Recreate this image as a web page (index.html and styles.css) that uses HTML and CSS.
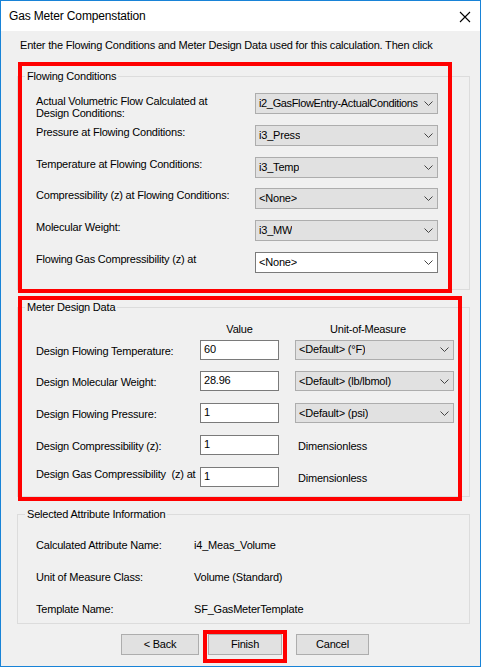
FILE: index.html
```html
<!DOCTYPE html>
<html>
<head>
<meta charset="utf-8">
<title>Gas Meter Compenstation</title>
<link rel="stylesheet" href="styles.css">
</head>
<body>
<div class="window">
  <div class="titlebar">
    <span class="title">Gas Meter Compenstation</span>
    <svg class="close" width="12" height="12" viewBox="0 0 12 12"><path d="M1 1L11 11M11 1L1 11" stroke="#000" stroke-width="1.1" fill="none"/></svg>
  </div>
  <div class="body">
    <p class="intro">Enter the Flowing Conditions and Meter Design Data used for this calculation. Then click</p>

    <div class="group g-flow">
      <span class="legend">Flowing Conditions</span>
      <div class="flow-grid">
        <span class="lbl two">Actual Volumetric Flow Calculated at<br>Design Conditions:</span>
        <div class="combo"><span class="tight">i2_GasFlowEntry-ActualConditions</span><svg class="chev" width="9" height="5" viewBox="0 0 9 5"><path d="M0.5 0.5L4.5 4.5L8.5 0.5" stroke="#444" fill="none"/></svg></div>
        <span class="lbl">Pressure at Flowing Conditions:</span>
        <div class="combo"><span>i3_Press</span><svg class="chev" width="9" height="5" viewBox="0 0 9 5"><path d="M0.5 0.5L4.5 4.5L8.5 0.5" stroke="#444" fill="none"/></svg></div>
        <span class="lbl">Temperature at Flowing Conditions:</span>
        <div class="combo"><span>i3_Temp</span><svg class="chev" width="9" height="5" viewBox="0 0 9 5"><path d="M0.5 0.5L4.5 4.5L8.5 0.5" stroke="#444" fill="none"/></svg></div>
        <span class="lbl">Compressibility (z) at Flowing Conditions:</span>
        <div class="combo"><span>&lt;None&gt;</span><svg class="chev" width="9" height="5" viewBox="0 0 9 5"><path d="M0.5 0.5L4.5 4.5L8.5 0.5" stroke="#444" fill="none"/></svg></div>
        <span class="lbl">Molecular Weight:</span>
        <div class="combo"><span>i3_MW</span><svg class="chev" width="9" height="5" viewBox="0 0 9 5"><path d="M0.5 0.5L4.5 4.5L8.5 0.5" stroke="#444" fill="none"/></svg></div>
        <span class="lbl">Flowing Gas Compressibility (z) at</span>
        <div class="combo white"><span>&lt;None&gt;</span><svg class="chev" width="9" height="5" viewBox="0 0 9 5"><path d="M0.5 0.5L4.5 4.5L8.5 0.5" stroke="#444" fill="none"/></svg></div>
      </div>
    </div>

    <div class="group g-design">
      <span class="legend">Meter Design Data</span>
      <div class="design-head">
        <span class="hdr-value">Value</span>
        <span class="hdr-uom">Unit-of-Measure</span>
      </div>
      <div class="design-grid">
        <span class="lbl mid">Design Flowing Temperature:</span>
        <div class="textbox">60</div>
        <div class="combo"><span>&lt;Default&gt; (°F)</span><svg class="chev" width="9" height="5" viewBox="0 0 9 5"><path d="M0.5 0.5L4.5 4.5L8.5 0.5" stroke="#444" fill="none"/></svg></div>

        <span class="lbl mid">Design Molecular Weight:</span>
        <div class="textbox">28.96</div>
        <div class="combo"><span>&lt;Default&gt; (lb/lbmol)</span><svg class="chev" width="9" height="5" viewBox="0 0 9 5"><path d="M0.5 0.5L4.5 4.5L8.5 0.5" stroke="#444" fill="none"/></svg></div>

        <span class="lbl mid">Design Flowing Pressure:</span>
        <div class="textbox">1</div>
        <div class="combo"><span>&lt;Default&gt; (psi)</span><svg class="chev" width="9" height="5" viewBox="0 0 9 5"><path d="M0.5 0.5L4.5 4.5L8.5 0.5" stroke="#444" fill="none"/></svg></div>

        <span class="lbl mid">Design Compressibility (z):</span>
        <div class="textbox">1</div>
        <span class="dim">Dimensionless</span>

        <span class="lbl top">Design Gas Compressibility&nbsp; (z) at</span>
        <div class="textbox">1</div>
        <span class="dim">Dimensionless</span>
      </div>
    </div>

    <div class="group g-info">
      <span class="legend">Selected Attribute Information</span>
      <div class="info-grid">
        <span>Calculated Attribute Name:</span><span>i4_Meas_Volume</span>
        <span>Unit of Measure Class:</span><span>Volume (Standard)</span>
        <span>Template Name:</span><span>SF_GasMeterTemplate</span>
      </div>
    </div>

    <div class="buttons">
      <button class="btn btn-back">&lt; Back</button>
      <button class="btn btn-finish">Finish</button>
      <button class="btn btn-cancel">Cancel</button>
    </div>
  </div>

  <div class="mark mark-flow"></div>
  <div class="mark mark-design"></div>
  <div class="mark mark-finish"></div>
</div>
</body>
</html>
```

FILE: styles.css
```css
html, body {
  margin: 0;
  padding: 0;
}
body {
  font-family: "Liberation Sans", Arial, sans-serif;
  font-size: 11px;
  letter-spacing: -0.2px;
  color: #000;
  background: #fff;
}
.window {
  position: relative;
  width: 481px;
  height: 667px;
  box-sizing: border-box;
  border: 1px solid #1883d7;
  display: flex;
  flex-direction: column;
  overflow: hidden;
}
.titlebar {
  height: 30px;
  flex: none;
  background: #fff;
  display: flex;
  align-items: center;
  justify-content: space-between;
  padding: 0 9px 0 8px;
}
.title {
  font-size: 12px;
  letter-spacing: -0.15px;
  line-height: 15px;
  margin-top: 1px;
}
.close {
  display: block;
  margin-top: 1px;
}
.body {
  flex: 1;
  background: #f0f0f0;
  padding: 8px 0 0 16px;
}
.intro {
  margin: 0 0 24px 3px;
  line-height: 13px;
  white-space: nowrap;
}
.group {
  position: relative;
  width: 453px;
  box-sizing: border-box;
  border: 1px solid #dcdcdc;
}
.legend {
  position: absolute;
  top: -7px;
  left: 7px;
  padding: 0 2px;
  line-height: 13px;
  background: #f0f0f0;
  white-space: nowrap;
}
.g-flow {
  padding: 16px 0 16px 18px;
}
.flow-grid {
  display: grid;
  grid-template-columns: 219px 183px;
  grid-auto-rows: 21px;
  row-gap: 10.75px;
}
.lbl {
  line-height: 13px;
  white-space: nowrap;
  align-self: start;
  margin-top: 1px;
}
.lbl.two {
  line-height: 12px;
  margin-top: 2px;
}
.lbl.mid {
  align-self: center;
  margin-top: 3px;
}
.lbl.top {
  align-self: start;
  margin-top: 1px;
}
.combo {
  box-sizing: border-box;
  border: 1px solid #adadad;
  background: #e1e1e1;
  display: flex;
  align-items: center;
  justify-content: space-between;
  padding: 0 4px 0 3px;
  white-space: nowrap;
  overflow: hidden;
  line-height: 13px;
}
.combo span {
  overflow: hidden;
}
.combo .tight {
  letter-spacing: -0.35px;
  overflow: visible;
}
.combo.white {
  background: #fff;
  border-color: #7a7a7a;
}
.chev {
  flex: none;
  display: block;
  margin-left: 2px;
}
.g-design {
  margin-top: 17px;
  padding: 15px 0 9px 18px;
}
.design-head {
  display: flex;
  line-height: 13px;
  margin-bottom: 4px;
  white-space: nowrap;
}
.hdr-value {
  margin-left: 164px;
  width: 79px;
  text-align: center;
}
.hdr-uom {
  margin-left: 51px;
}
.design-grid {
  display: grid;
  grid-template-columns: 164px 79px 175px;
  grid-auto-rows: 20px;
  row-gap: 11.7px;
}
.design-grid > .combo {
  margin-left: 16px;
  width: 159px;
}
.textbox {
  box-sizing: border-box;
  border: 1px solid #7a7a7a;
  background: #fff;
  padding: 0 3px;
  line-height: 16px;
}
.dim {
  align-self: center;
  margin-top: 3px;
  margin-left: 19px;
  line-height: 13px;
}
.g-info {
  margin-top: 17px;
  padding: 24px 0 7px 18px;
}
.info-grid {
  display: grid;
  grid-template-columns: 158px auto;
  grid-auto-rows: 13px;
  row-gap: 19px;
  line-height: 13px;
  white-space: nowrap;
}
.buttons {
  display: flex;
  margin-top: 10px;
  padding-left: 104px;
}
.btn {
  font-family: "Liberation Sans", Arial, sans-serif;
  font-size: 11px;
  letter-spacing: -0.2px;
  height: 21px;
  box-sizing: border-box;
  border: 1px solid #adadad;
  background: #e1e1e1;
  color: #000;
  padding: 0;
  margin: 0;
}
.btn-back {
  width: 78px;
}
.btn-finish {
  width: 74px;
  margin-left: 9px;
}
.btn-cancel {
  width: 73px;
  margin-left: 14px;
}
.mark {
  position: absolute;
  box-sizing: border-box;
  border: 4px solid #ff0000;
  pointer-events: none;
}
.mark-flow {
  left: 17px;
  top: 61px;
  width: 434px;
  height: 231px;
}
.mark-design {
  left: 17px;
  top: 295px;
  width: 444px;
  height: 205px;
}
.mark-finish {
  left: 202px;
  top: 629px;
  width: 84px;
  height: 33px;
}
```
